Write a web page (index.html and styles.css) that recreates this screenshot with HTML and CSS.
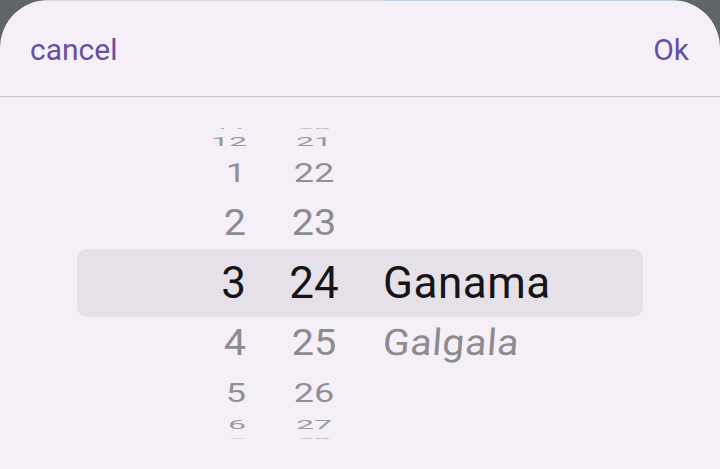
FILE: index.html
```html
<!DOCTYPE html>
<html lang="en">
<head>
<meta charset="utf-8">
<title>Picker</title>
<link rel="stylesheet" href="styles.css">
</head>
<body>
<div class="sheet">
  <header class="bar">
    <span class="btn">cancel</span>
    <span class="btn">Ok</span>
  </header>
  <div class="picker">
    <div class="row r4"><span class="cell c1">11</span><span class="cell c2">20</span><span class="cell c3"></span></div>
    <div class="row r3"><span class="cell c1">12</span><span class="cell c2">21</span><span class="cell c3"></span></div>
    <div class="row r2"><span class="cell c1">1</span><span class="cell c2">22</span><span class="cell c3"></span></div>
    <div class="row r1"><span class="cell c1">2</span><span class="cell c2">23</span><span class="cell c3"></span></div>
    <div class="row r0"><span class="cell c1">3</span><span class="cell c2">24</span><span class="cell c3">Ganama</span></div>
    <div class="row r1"><span class="cell c1">4</span><span class="cell c2">25</span><span class="cell c3 slant">Galgala</span></div>
    <div class="row r2"><span class="cell c1">5</span><span class="cell c2">26</span><span class="cell c3"></span></div>
    <div class="row r3"><span class="cell c1">6</span><span class="cell c2">27</span><span class="cell c3"></span></div>
    <div class="row r4"><span class="cell c1">7</span><span class="cell c2">28</span><span class="cell c3"></span></div>
  </div>
</div>
</body>
</html>
```
FILE: styles.css
```css
html, body {
  margin: 0;
  padding: 0;
  height: 100%;
}
body {
  background: #5f6668;
  font-family: Roboto, "Noto Sans", sans-serif;
  overflow: hidden;
}
.sheet {
  height: 469px;
  border-radius: 48px 48px 0 0;
  background:
    linear-gradient(to right, #dcd8de 0, #dcd8de 384px, #c5d1e9 384px, #c5d1e9 100%) top left / 100% 1px no-repeat,
    #f5f0f7;
  display: flex;
  flex-direction: column;
}
.bar {
  height: 92px;
  padding: 4px 31px 0 30px;
  display: flex;
  align-items: center;
  justify-content: space-between;
  border-bottom: 1px solid #c9c4cb;
}
.btn {
  color: #6550a2;
  font-size: 30px;
  line-height: 36px;
}
.picker {
  margin-top: 28px;
  height: 316px;
  overflow: hidden;
  display: flex;
  flex-direction: column;
  justify-content: center;
}
.row {
  flex: none;
  display: flex;
  margin: 0 77px;
  padding-left: 121px;
  font-size: 44px;
  color: #8c8c8f;
}
.cell {
  display: block;
  white-space: nowrap;
}
.c1 {
  width: 48px;
  text-align: right;
  transform-origin: right center;
}
.c2 {
  width: 60px;
  margin-left: 38px;
  text-align: center;
  transform-origin: center center;
}
.c3 {
  margin-left: 39px;
  text-align: left;
  transform-origin: left center;
  letter-spacing: 0.5px;
}
.r0 {
  height: 68px;
  line-height: 68px;
  margin: -4px 77px;
  border-radius: 10px;
  background: #e6e1e9;
  color: #151417;
}
.r1 { height: 60px; line-height: 60px; }
.r2 { height: 40px; line-height: 40px; color: #909093; }
.r3 { height: 22px; line-height: 22px; color: #9a999d; }
.r4 { height: 6px; line-height: 6px; color: #b3b2b6; }
.r1 .cell { transform: scale(0.9, 0.83); }
.r2 .cell { transform: scale(0.82, 0.59); }
.r3 .cell { transform: scale(0.73, 0.3); }
.r4 .cell { transform: scale(0.68, 0.05); }
.r1 .slant { transform: scale(0.9, 0.83) skewX(-4deg); }
```
